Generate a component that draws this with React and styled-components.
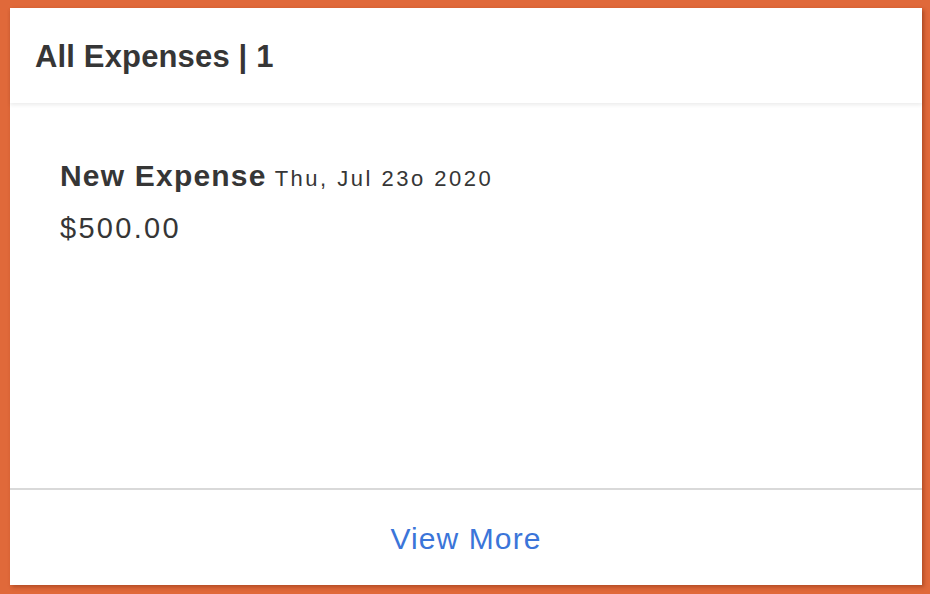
import React from 'react'
import styled, { createGlobalStyle } from 'styled-components'

const GlobalStyle = createGlobalStyle`
  html, body {
    margin: 0;
    padding: 0;
    background: #e0693a;
  }
  body {
    font-family: "Liberation Sans", Arial, sans-serif;
    color: #363636;
  }
`

const Page = styled.div`
  box-sizing: border-box;
  width: 930px;
  height: 594px;
  padding: 8px 8px 9px 10px;
  display: flex;
`

const Card = styled.section`
  flex: 1;
  display: flex;
  flex-direction: column;
  background: #fff;
  box-shadow: 2px 2px 4px rgba(120, 40, 10, 0.45);
`

const Header = styled.header`
  box-sizing: border-box;
  height: 95px;
  display: flex;
  align-items: center;
  padding: 3px 25px 0;
  box-shadow: 0 2px 4px rgba(0, 0, 0, 0.08);
  position: relative;
  z-index: 1;
`

const Title = styled.h2`
  margin: 0;
  font-size: 31px;
  font-weight: 700;
  letter-spacing: 0.15px;
`

const Body = styled.div`
  flex: 1;
  padding: 56px 50px 0;
  border-bottom: 2px solid #d9d9d9;
`

const ExpenseRow = styled.div`
  display: flex;
  flex-direction: column;
  gap: 15px;
`

const ExpenseHead = styled.div`
  display: flex;
  align-items: baseline;
  gap: 8px;
`

const ExpenseName = styled.span`
  font-size: 30px;
  line-height: 34px;
  font-weight: 700;
  letter-spacing: 1.2px;
`

const ExpenseDate = styled.span`
  font-size: 22px;
  line-height: 34px;
  letter-spacing: 2.5px;
`

const Amount = styled.div`
  font-size: 29px;
  line-height: 34px;
  letter-spacing: 2.3px;
`

const Footer = styled.footer`
  box-sizing: border-box;
  height: 95px;
  display: flex;
  align-items: center;
  justify-content: center;
  padding-top: 3px;
`

const MoreLink = styled.a`
  font-size: 30px;
  letter-spacing: 1.1px;
  color: #3b75d9;
  text-decoration: none;
  cursor: pointer;
`

export default function App() {
  return (
    <>
      <GlobalStyle />
      <Page>
        <Card>
          <Header>
            <Title>All Expenses | 1</Title>
          </Header>
          <Body>
            <ExpenseRow>
              <ExpenseHead>
                <ExpenseName>New Expense</ExpenseName>
                <ExpenseDate>Thu, Jul 23o 2020</ExpenseDate>
              </ExpenseHead>
              <Amount>$500.00</Amount>
            </ExpenseRow>
          </Body>
          <Footer>
            <MoreLink>View More</MoreLink>
          </Footer>
        </Card>
      </Page>
    </>
  )
}
